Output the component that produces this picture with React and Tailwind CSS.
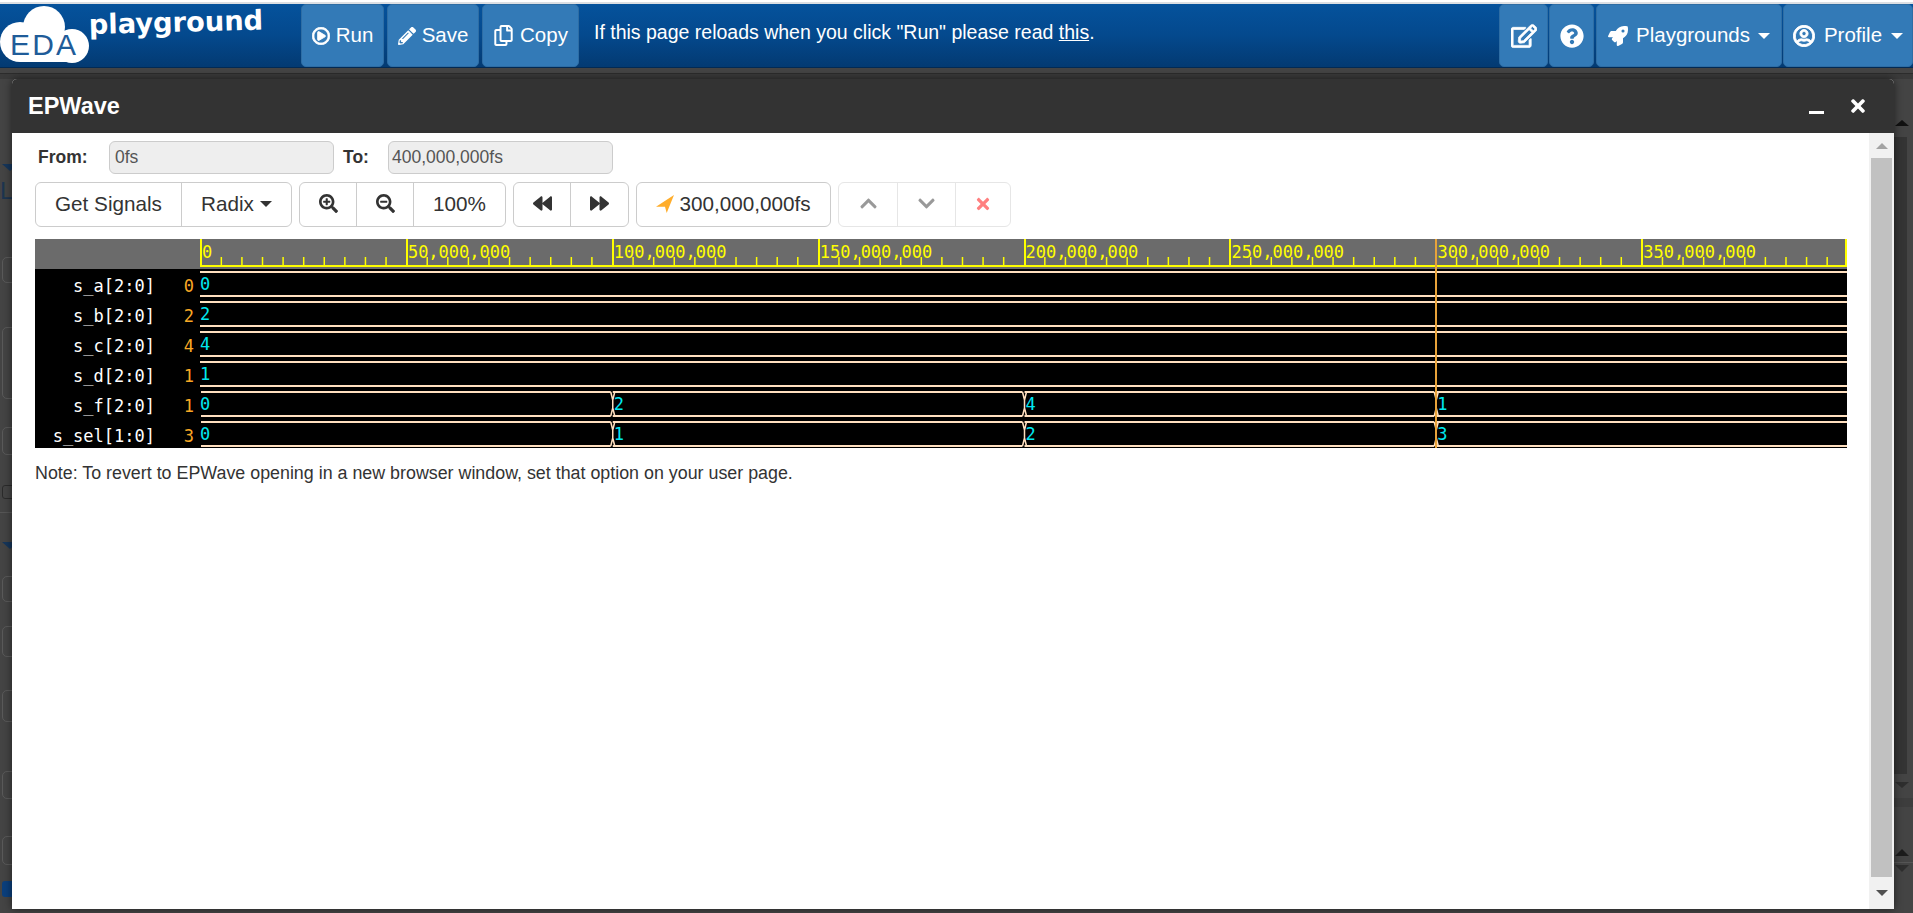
import {
  FaRegPlayCircle,
  FaPencilAlt,
  FaRegCopy,
  FaRegEdit,
  FaQuestionCircle,
  FaRocket,
  FaRegUserCircle,
  FaSearchPlus,
  FaSearchMinus,
  FaBackward,
  FaForward,
  FaChevronUp,
  FaChevronDown,
  FaTimes,
} from "react-icons/fa";

const RULER_LEFT = 200;
const RULER_RIGHT = 1847;
const STEP = (RULER_RIGHT - RULER_LEFT) / 80; // one minor tick is 5,000,000fs
const WIRE = "#ffdfbf";
const CURSOR_X = 1436;

const RULER_LABELS = ["0", "50,000,000", "100,000,000", "150,000,000", "200,000,000", "250,000,000", "300,000,000", "350,000,000"];

const SIGNALS = [
  { name: "s_a[2:0]", value: "0", segments: ["0"] },
  { name: "s_b[2:0]", value: "2", segments: ["2"] },
  { name: "s_c[2:0]", value: "4", segments: ["4"] },
  { name: "s_d[2:0]", value: "1", segments: ["1"] },
  { name: "s_f[2:0]", value: "1", segments: ["0", "2", "4", "1"] },
  { name: "s_sel[1:0]", value: "3", segments: ["0", "1", "2", "3"] },
];

const Caret = () => (
  <span className="inline-block w-0 h-0 border-x-[6px] border-x-transparent border-t-[6px] border-t-current" />
);

const NavButton = ({ className, children }) => (
  <div className={`h-[63px] flex items-center justify-center bg-[#337ab7] border border-[#2e6da4] rounded-[5px] text-white ${className}`}>
    {children}
  </div>
);

const ToolButton = ({ className = "", children }) => (
  <div className={`h-full flex items-center justify-center border-r border-[#ccc] last:border-r-0 pb-[2px] ${className}`}>{children}</div>
);

const ToolGroup = ({ className = "", children }) => (
  <div className={`h-[45px] flex border border-[#ccc] rounded-[6px] bg-white ${className}`}>{children}</div>
);

const Logo = () => (
  <svg className="shrink-0" width="301" height="64" viewBox="0 4 301 64">
    <g fill="#fff">
      <circle cx="20" cy="42" r="20" />
      <circle cx="44" cy="27" r="21" />
      <circle cx="72" cy="46" r="17" />
      <rect x="20" y="38" width="52" height="24" />
    </g>
    <text x="10" y="55" fontFamily="Liberation Sans, sans-serif" fontSize="30" fill="#1f5c99" textLength="66">
      EDA
    </text>
    <text x="89" y="34" fontFamily="DejaVu Sans, sans-serif" fontWeight="700" fontSize="27.3" fill="#fff" transform="rotate(-1.5 89 34)">
      playground
    </text>
  </svg>
);

const LocationArrow = () => (
  <svg width="18" height="18" viewBox="0 0 16 16" fill="#ffad2b">
    <path d="M16 0L0 10.5L8 10.5L9.5 16Z" />
  </svg>
);

const Wave = () => {
  const ticks = [];
  for (let i = 0; i <= 80; i++) {
    const x = RULER_LEFT + i * STEP;
    ticks.push(
      i % 10 === 0 ? (
        <rect key={i} x={Math.round(x)} y="239" width="2" height="28" fill="#ffff00" />
      ) : (
        <rect key={i} x={x} y="257" width="1.5" height="9" fill="#ffff00" />
      ),
    );
  }

  return (
    <svg className="block" width="1812" height="209" viewBox="35 239 1812 209">
      <rect x="35" y="239" width="1812" height="30" fill="#6b6b6b" />
      <rect x="35" y="269" width="1812" height="179" fill="#000" />
      <rect x={RULER_LEFT} y="265" width={RULER_RIGHT - RULER_LEFT} height="2" fill="#ffff00" />
      {ticks}
      <rect x={RULER_RIGHT - 2} y="239" width="2" height="28" fill="#ffff00" />
      {RULER_LABELS.map((label, i) => (
        <text key={label} x={RULER_LEFT + i * 205.9 + 2} y="258" fontFamily="DejaVu Sans Mono, monospace" fontSize="17" fill="#ffff00">
          {label}
        </text>
      ))}

      {SIGNALS.map((sig, row) => {
        const top = 272 + row * 30;
        const bottom = top + 24;
        return (
          <g key={sig.name}>
            <text x="155" y={top + 20} textAnchor="end" fontFamily="DejaVu Sans Mono, monospace" fontSize="17" fill="#fff">
              {sig.name}
            </text>
            <text x="194" y={top + 20} textAnchor="end" fontFamily="DejaVu Sans Mono, monospace" fontSize="17" fill="#f9a825">
              {sig.value}
            </text>
            {sig.segments.map((seg, i) => {
              const n = sig.segments.length;
              const start = n === 1 ? RULER_LEFT : RULER_LEFT + i * 411.75 + 1;
              const end = n === 1 ? RULER_RIGHT : i === n - 1 ? RULER_RIGHT : RULER_LEFT + (i + 1) * 411.75 - 1;
              const mid = RULER_LEFT + (i + 1) * 411.75 + 1;
              return (
                <g key={i}>
                  <path d={`M${start} ${top}H${end}M${start} ${bottom}H${end}`} stroke={WIRE} strokeWidth="2" fill="none" />
                  {i < n - 1 && (
                    <path
                      d={`M${end} ${top}L${mid} ${top + 8}V${bottom - 8}L${end} ${bottom}M${mid + 2} ${top}L${mid} ${top + 8}M${mid} ${bottom - 8}L${mid + 2} ${bottom}`}
                      stroke={WIRE}
                      strokeWidth="1.5"
                      fill="none"
                    />
                  )}
                  <text
                    x={n === 1 || i === 0 ? RULER_LEFT : RULER_LEFT + i * 411.75 + 2}
                    y={top + 18}
                    fontFamily="DejaVu Sans Mono, monospace"
                    fontSize="17"
                    fill="#00e8f0"
                  >
                    {seg}
                  </text>
                </g>
              );
            })}
          </g>
        );
      })}

      <rect x={CURSOR_X - 1} y="239" width="2" height="209" fill="#e8a33a" />
    </svg>
  );
};

// blurred page that shows behind the dialog on the left
const LeftStrip = () => (
  <div className="w-[12px] shrink-0 overflow-hidden flex flex-col">
    <div className="h-[96px]" />
    <div className="w-0 h-0 ml-[2px] border-x-[8px] border-x-transparent border-t-[7px] border-t-[#16365a]" />
    <div className="mt-[10px] h-[20px] text-[#1c3550] text-[24px] leading-[20px]">L</div>
    <div className="mt-[56px] h-[26px] w-[30px] ml-[2px] border border-[#5a5a5a] rounded-[5px]" />
    <div className="mt-[44px] h-[72px] w-[30px] ml-[2px] border border-[#5a5a5a] rounded-[5px]" />
    <div className="mt-[28px] h-[28px] w-[30px] ml-[2px] border border-[#5a5a5a] rounded-[5px]" />
    <div className="mt-[30px] h-[14px] w-[14px] ml-[2px] border border-[#2b2b2b] rounded-[3px]" />
    <div className="mt-[13px] h-px bg-[#555]" />
    <div className="mt-[29px] w-0 h-0 ml-[2px] border-x-[8px] border-x-transparent border-t-[7px] border-t-[#16365a]" />
    <div className="mt-[27px] h-[26px] w-[30px] ml-[2px] border border-[#5a5a5a] rounded-[5px]" />
    <div className="mt-[24px] h-[31px] w-[30px] ml-[2px] border border-[#5a5a5a] rounded-[5px]" />
    <div className="mt-[33px] h-[32px] w-[30px] ml-[2px] border border-[#5a5a5a] rounded-[5px]" />
    <div className="mt-[49px] h-[28px] w-[30px] ml-[2px] border border-[#5a5a5a] rounded-[5px]" />
    <div className="mt-[37px] h-[29px] w-[30px] ml-[2px] border border-[#5a5a5a] rounded-[5px]" />
    <div className="mt-[16px] h-[16px] w-[14px] ml-[2px] bg-[#0b3f7c] rounded-[3px]" />
  </div>
);

const RightStrip = () => (
  <div className="w-[19px] shrink-0 flex flex-col">
    <div className="h-[52px]" />
    <div className="w-0 h-0 ml-[1px] border-x-[7px] border-x-transparent border-b-[6px] border-b-[#111]" />
    <div className="mt-[11px] h-[637px] w-[13px] bg-[#343434]" />
    <div className="mt-[8px] w-0 h-0 ml-[1px] border-x-[7px] border-x-transparent border-t-[6px] border-t-[#2e2e2e]" />
    <div className="mt-[10px] h-[9px] bg-[#3d3d3d]" />
    <div className="mt-[42px] w-0 h-0 ml-[1px] border-x-[7px] border-x-transparent border-b-[7px] border-b-[#1c1c1c]" />
    <div className="mt-[6px] h-px bg-[#555]" />
    <div className="mt-[2px] w-0 h-0 ml-[1px] border-x-[7px] border-x-transparent border-t-[7px] border-t-[#2e2e2e]" />
  </div>
);

const Dialog = () => (
  <div className="absolute left-[12px] top-[79px] w-[1882px] h-[830px] flex flex-col bg-white rounded-t-[5px] shadow-[0_0_8px_rgba(0,0,0,0.55)]">
    <div className="h-[54px] shrink-0 flex items-center bg-[#333] rounded-t-[5px] text-white pl-[16px]">
      <span className="mt-[2px] font-bold text-[23.5px]">EPWave</span>
      <div className="ml-auto mt-[12px] mr-[70px] w-[15px] h-[3px] bg-white" />
      <FaTimes className="absolute right-[26px] top-[17px]" size={20} />
    </div>
    <div className="flex-1 flex min-h-0">
      <div className="flex-1 min-w-0 pl-[23px] text-[#333] text-[17.5px]">
        <div className="mt-[8px] h-[33px] flex items-center">
          <span className="w-[74px] pl-[3px] font-bold">From:</span>
          <div className="w-[225px] h-full flex items-center pl-[5px] bg-[#eee] border border-[#ccc] rounded-[6px] text-[#555]">0fs</div>
          <span className="w-[54px] pl-[9px] font-bold">To:</span>
          <div className="w-[225px] h-full flex items-center pl-[3px] bg-[#eee] border border-[#ccc] rounded-[6px] text-[#555]">400,000,000fs</div>
        </div>
        <div className="mt-[8px] flex items-center text-[20.7px]">
          <ToolGroup className="w-[257px]">
            <ToolButton className="w-[146px]">Get Signals</ToolButton>
            <ToolButton className="flex-1 gap-[6px]">
              Radix
              <Caret />
            </ToolButton>
          </ToolGroup>
          <ToolGroup className="ml-[7px] w-[207px]">
            <ToolButton className="w-[57px]"><FaSearchPlus size={19} /></ToolButton>
            <ToolButton className="w-[57px]"><FaSearchMinus size={19} /></ToolButton>
            <ToolButton className="flex-1">100%</ToolButton>
          </ToolGroup>
          <ToolGroup className="ml-[7px] w-[116px]">
            <ToolButton className="w-[57px]"><FaBackward size={19} /></ToolButton>
            <ToolButton className="flex-1"><FaForward size={19} /></ToolButton>
          </ToolGroup>
          <ToolGroup className="ml-[7px] w-[195px] items-center justify-center gap-[5px] pb-[2px]">
            <LocationArrow />
            300,000,000fs
          </ToolGroup>
          <ToolGroup className="ml-[7px] w-[173px] border-[#e6e6e6]">
            <ToolButton className="w-[59px] border-[#e6e6e6] text-[#999]"><FaChevronUp size={19} /></ToolButton>
            <ToolButton className="w-[58px] border-[#e6e6e6] text-[#999]"><FaChevronDown size={19} /></ToolButton>
            <ToolButton className="flex-1 text-[#ff8080]"><FaTimes size={18} /></ToolButton>
          </ToolGroup>
        </div>
        <div className="mt-[12px]"><Wave /></div>
        <p className="mt-[15px] text-[17.85px] leading-[20px]">
          Note: To revert to EPWave opening in a new browser window, set that option on your user page.
        </p>
      </div>
      <div className="w-[25px] shrink-0 flex flex-col items-center bg-[#f1f1f1]">
        <div className="h-[25px] shrink-0 flex items-center justify-center">
          <div className="w-0 h-0 border-x-[6px] border-x-transparent border-b-[6px] border-b-[#a3a3a3]" />
        </div>
        <div className="flex-1 w-[21px] bg-[#c1c1c1]" />
        <div className="h-[32px] shrink-0 flex items-center justify-center">
          <div className="w-0 h-0 border-x-[6px] border-x-transparent border-t-[6px] border-t-[#505050]" />
        </div>
      </div>
    </div>
  </div>
);

export default function App() {
  return (
    <div className="relative w-[1913px] h-[913px] overflow-hidden bg-[#444] font-['Liberation_Sans',Arial,sans-serif]">
      <div className="h-[2px] bg-white" />
      <div className="h-[2px] bg-[#dcdfe3]" />
      <nav className="h-[64px] flex bg-gradient-to-b from-[#05529c] via-[#04498d] to-[#033a72] border-b border-[#022a54] text-[20.5px]">
        <Logo />
        <div className="flex gap-[3px]">
          <NavButton className="w-[83px] gap-[6px]"><FaRegPlayCircle size={18} stroke="currentColor" strokeWidth={24} />Run</NavButton>
          <NavButton className="w-[92px] gap-[6px]"><FaPencilAlt size={18} />Save</NavButton>
          <NavButton className="w-[97px] gap-[6px]"><FaRegCopy size={21} />Copy</NavButton>
        </div>
        <div className="ml-[15px] mt-[16px] text-white text-[19.5px] leading-[24px]">
          If this page reloads when you click "Run" please read <span className="underline">this</span>.
        </div>
        <div className="ml-auto flex gap-px">
          <NavButton className="w-[49px]"><FaRegEdit size={26} stroke="currentColor" strokeWidth={16} /></NavButton>
          <NavButton className="w-[45px]"><FaQuestionCircle size={24} /></NavButton>
          <NavButton className="ml-px w-[186px] gap-[8px]"><FaRocket size={20} />Playgrounds<Caret /></NavButton>
          <NavButton className="w-[130px] gap-[9px]"><FaRegUserCircle size={22} stroke="currentColor" strokeWidth={20} />Profile<Caret /></NavButton>
        </div>
      </nav>
      <div className="h-[5px] bg-[#444]" />
      <div className="h-[6px] bg-[#3a3a3a] border-t border-[#2c2c2c]" />
      <div className="h-[834px] flex justify-between -mt-[11px]">
        <LeftStrip />
        <RightStrip />
      </div>
      <Dialog />
    </div>
  );
}
